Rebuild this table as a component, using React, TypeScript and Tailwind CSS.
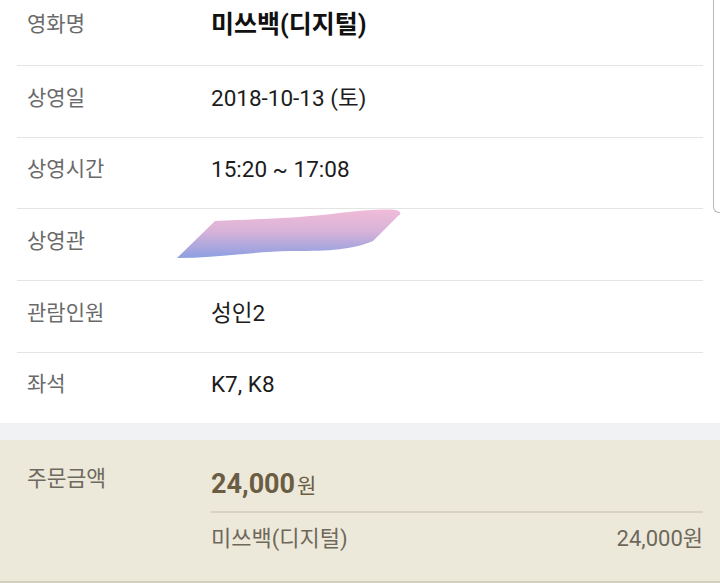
import React from "react";

const font = { fontFamily: '"Roboto", "Noto Sans CJK KR", sans-serif' };

function Row({ label, children, h, last }: { label: string; children?: React.ReactNode; h: string; last?: boolean }) {
  return (
    <div className={`flex items-center pb-[6px] ${h} ${last ? "" : "border-b border-[#e4e4e4]"}`}>
      <div className="w-[194px] pl-[10px] text-[21px] text-[#6a6a6a]">{label}</div>
      <div className="flex-1 text-[22.5px] text-[#1c1c1c]">{children}</div>
    </div>
  );
}

export default function App() {
  return (
    <div className="relative w-[720px] h-[583px] bg-white overflow-hidden" style={font}>
      <div className="pl-[17px] pr-[17px]">
        <div className="flex items-center h-[66px] border-b border-[#e4e4e4]">
          <div className="w-[194px] pl-[10px] text-[21px] text-[#6a6a6a] mt-[-16px]">영화명</div>
          <div className="flex-1 text-[25px] font-bold text-[#111] mt-[-16px]">미쓰백(디지털)</div>
        </div>
        <Row label="상영일" h="h-[72px]">2018-10-13 (토)</Row>
        <Row label="상영시간" h="h-[71px]">15:20 ~ 17:08</Row>
        <Row label="상영관" h="h-[72px]" />
        <Row label="관람인원" h="h-[72px]">성인2</Row>
        <Row label="좌석" h="h-[70px]" last>K7, K8</Row>
      </div>
      <div className="h-[17px] bg-[#f1f2f4]" />
      <div className="h-[143px] bg-[#ede9da] border-b-2 border-[#d4d0bf] pl-[27px] pr-[17px]">
        <div className="flex">
          <div className="w-[184px] pt-[23px] text-[21.5px] text-[#6e695e]">주문금액</div>
          <div className="flex-1">
            <div className="flex items-baseline h-[73px] pt-[31px] border-b-2 border-[#d8d3c3]">
              <span className="text-[27px] font-bold text-[#6b5d44] leading-none">24,000</span>
              <span className="text-[21px] text-[#6b5d44] ml-[2px] leading-none">원</span>
            </div>
            <div className="flex justify-between items-center h-[50px] text-[22px] text-[#6e685b]">
              <span>미쓰백(디지털)</span>
              <span>24,000원</span>
            </div>
          </div>
        </div>
      </div>
      <svg className="absolute left-[160px] top-[204px]" width="250" height="60" viewBox="160 204 250 60">
        <defs>
          <linearGradient id="rg" x1="0" y1="0" x2="0" y2="1">
            <stop offset="0" stopColor="#f0bcd8" />
            <stop offset="0.45" stopColor="#d8b2d8" />
            <stop offset="1" stopColor="#8c9fe2" />
          </linearGradient>
        </defs>
        <path
          d="M177 258 L215 221 C250 219 280 219 310 216 C340 214 370 208 396 210 C402 212 401 214 398 216 L373 241 C350 251 320 251 290 251 C250 252 215 258 177 258 Z"
          fill="url(#rg)"
        />
      </svg>
      <div className="absolute right-0 top-0 w-[7px] h-[213px] border-l border-b border-[#b8b8b8] rounded-bl-[6px]" />
    </div>
  );
}
